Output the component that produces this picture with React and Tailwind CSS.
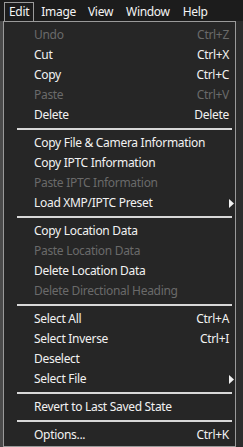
const items = [
  { label: 'Undo', shortcut: 'Ctrl+Z', disabled: true },
  { label: 'Cut', shortcut: 'Ctrl+X' },
  { label: 'Copy', shortcut: 'Ctrl+C' },
  { label: 'Paste', shortcut: 'Ctrl+V', disabled: true },
  { label: 'Delete', shortcut: 'Delete' },
  { sep: true },
  { label: 'Copy File & Camera Information' },
  { label: 'Copy IPTC Information' },
  { label: 'Paste IPTC Information', disabled: true },
  { label: 'Load XMP/IPTC Preset', submenu: true },
  { sep: true },
  { label: 'Copy Location Data' },
  { label: 'Paste Location Data', disabled: true },
  { label: 'Delete Location Data' },
  { label: 'Delete Directional Heading', disabled: true },
  { sep: true },
  { label: 'Select All', shortcut: 'Ctrl+A' },
  { label: 'Select Inverse', shortcut: 'Ctrl+I' },
  { label: 'Deselect' },
  { label: 'Select File', submenu: true },
  { sep: true },
  { label: 'Revert to Last Saved State' },
  { sep: true },
  { label: 'Options...', shortcut: 'Ctrl+K' },
];

function MenuRow({ item }) {
  if (item.sep) {
    return (
      <div className="h-[8px] flex items-center pl-[13px] pr-[3px]">
        <div className="h-[2px] w-full bg-[#d8d8d8]" />
      </div>
    );
  }
  return (
    <div
      className={`h-[20px] flex items-center pl-[30px] pr-[6px] ${
        item.disabled ? 'text-[#6a6a6a]' : 'text-[#f2f2f2]'
      }`}
    >
      <span className="flex-1 whitespace-nowrap">{item.label}</span>
      {item.shortcut && <span className="whitespace-nowrap">{item.shortcut}</span>}
      {item.submenu && (
        <svg width="5" height="9" viewBox="0 0 5 9" className="-mr-[5px]">
          <path d="M0 0 L5 4.5 L0 9 Z" fill="#f2f2f2" />
        </svg>
      )}
    </div>
  );
}

export default function App() {
  return (
    <div
      className="w-[243px] h-[447px] overflow-hidden bg-[#1e1e1e] text-[12px] leading-none tracking-[-0.3px]"
      style={{ fontFamily: '"Noto Sans", "Open Sans", sans-serif' }}
    >
      <div className="h-[21px] flex items-end text-[#f4f4f4] bg-[#1c1c1c]">
        <div className="ml-[4px] h-[19px] px-[4px] flex items-center border border-[#9a9a9a] border-b-0">Edit</div>
        <div className="ml-[7px] h-[19px] flex items-center">Image</div>
        <div className="ml-[12px] h-[19px] flex items-center">View</div>
        <div className="ml-[13px] h-[19px] flex items-center">Window</div>
        <div className="ml-[13px] h-[19px] flex items-center">Help</div>
      </div>
      <div className="flex h-[426px]">
        <div className="w-[3px] bg-[#4a4a4a]" />
        <div className="w-[233px] border border-[#9a9a9a] bg-[#262626] pt-[3px]">
          {items.map((item, i) => (
            <MenuRow key={i} item={item} />
          ))}
        </div>
        <div className="flex-1 bg-[#2c2c2c]" />
      </div>
    </div>
  );
}
